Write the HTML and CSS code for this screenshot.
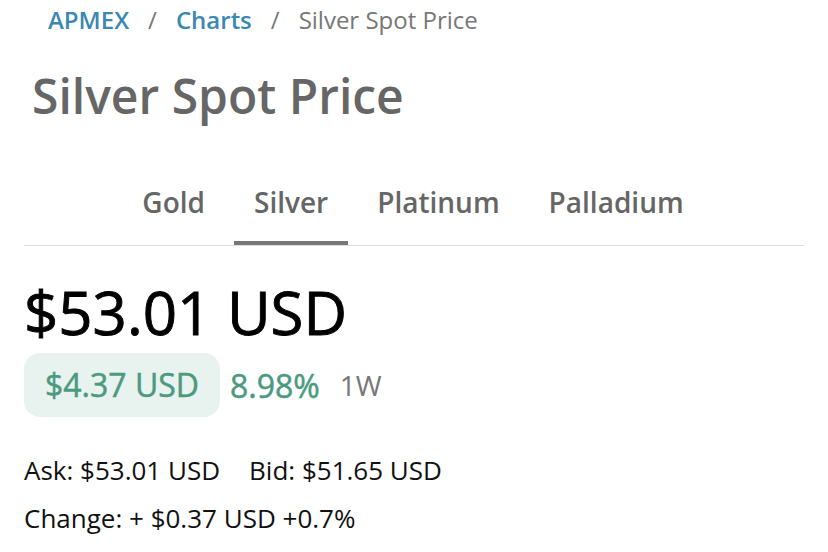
FILE: index.html
```html
<!DOCTYPE html>
<html>
<head>
<meta charset="utf-8">
<link rel="stylesheet" href="styles.css">
</head>
<body>
<div class="page">
  <nav class="crumbs">
    <a class="crumb-link">APMEX</a>
    <span class="sep">/</span>
    <a class="crumb-link">Charts</a>
    <span class="sep">/</span>
    <span class="crumb-current">Silver Spot Price</span>
  </nav>
  <h1 class="title">Silver Spot Price</h1>
  <div class="tabs">
    <div class="tab">Gold</div>
    <div class="tab active">Silver</div>
    <div class="tab">Platinum</div>
    <div class="tab">Palladium</div>
  </div>
  <div class="price">$53.01 USD</div>
  <div class="change-row">
    <span class="pill">$4.37 USD</span>
    <span class="pct">8.98%</span>
    <span class="period">1W</span>
  </div>
  <div class="stats">
    <div class="stat-line"><span>Ask: $53.01 USD</span><span>Bid: $51.65 USD</span></div>
    <div class="stat-line"><span>Change: + $0.37 USD +0.7%</span></div>
  </div>
</div>
</body>
</html>
```
FILE: styles.css
```css
* { box-sizing: border-box; margin: 0; padding: 0; }
html, body { background: #fff; }
body { font-family: "Open Sans", sans-serif; color: #111; }
.page { width: 780px; margin-left: 24px; }
.crumbs { display: flex; align-items: baseline; padding-left: 24px; height: 40px; font-size: 24px; line-height: 40px; }
.crumb-link { color: #3b88b3; font-weight: 600; }
.sep { color: #777; margin: 0 19px; }
.crumb-current { color: #777; }
.title { font-size: 48px; font-weight: 600; color: #666; padding-left: 8px; line-height: 64px; margin-top: 24px; }
.tabs { display: flex; justify-content: center; gap: 9px; border-bottom: 1px solid #ddd; margin-top: 56px; padding-right: 2px; }
.tab { font-size: 28px; font-weight: 600; color: #666; padding: 0 20px 21px; border-bottom: 4px solid transparent; line-height: 36px; }
.tab.active { border-bottom-color: #777; }
.price { font-size: 60px; font-weight: 500; color: #000; line-height: 72px; margin-top: 30px; -webkit-text-stroke: 0.9px #000; }
.change-row { display: flex; align-items: center; margin-top: 5px; }
.pill { background: #e8f3ef; color: #4b9a80; font-size: 32px; font-weight: 500; border-radius: 16px; padding: 12px 21px; line-height: 40px; -webkit-text-stroke: 0.5px #4b9a80; }
.pct { color: #4b9a80; font-size: 32px; font-weight: 500; margin-left: 10px; -webkit-text-stroke: 0.5px #4b9a80; }
.period { color: #777; font-size: 28px; margin-left: 20px; }
.stats { margin-top: 29px; font-size: 26px; color: #111; }
.stat-line { display: flex; gap: 29px; line-height: 48px; }
```
